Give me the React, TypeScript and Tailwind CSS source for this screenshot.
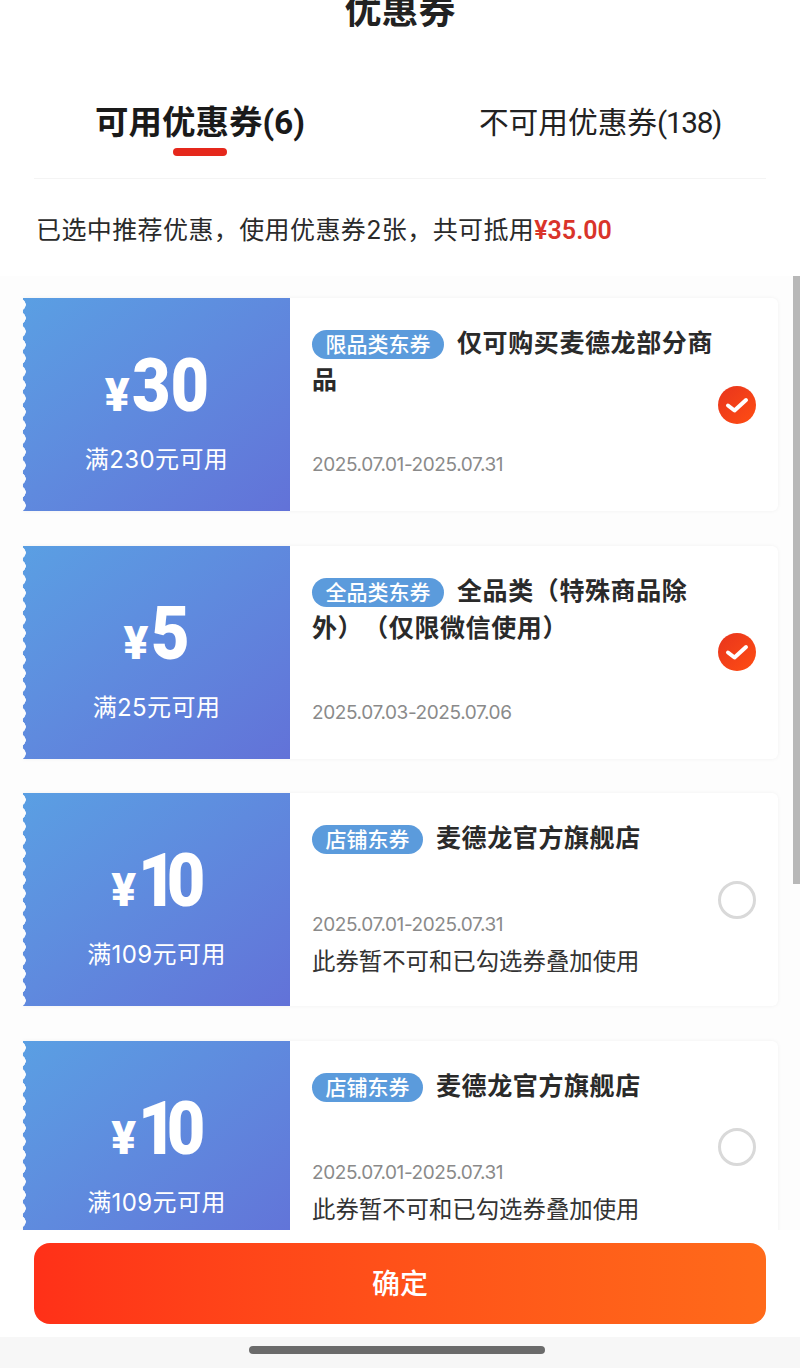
import React from 'react';

interface Coupon {
  amount: string;
  amountClass: string;
  condition: string;
  tag: string;
  title: string;
  date: string;
  note?: string;
  checked: boolean;
}

const coupons: Coupon[] = [
  { amount: '30', amountClass: 'mr-[-9px]', condition: '满230元可用', tag: '限品类东券', title: '仅可购买麦德龙部分商品', date: '2025.07.01-2025.07.31', checked: true },
  { amount: '5', amountClass: 'mr-[-4px]', condition: '满25元可用', tag: '全品类东券', title: '全品类（特殊商品除外）（仅限微信使用）', date: '2025.07.03-2025.07.06', checked: true },
  { amount: '10', amountClass: 'tracking-[-11px]', condition: '满109元可用', tag: '店铺东券', title: '麦德龙官方旗舰店', date: '2025.07.01-2025.07.31', note: '此券暂不可和已勾选券叠加使用', checked: false },
  { amount: '10', amountClass: 'tracking-[-11px]', condition: '满109元可用', tag: '店铺东券', title: '麦德龙官方旗舰店', date: '2025.07.01-2025.07.31', note: '此券暂不可和已勾选券叠加使用', checked: false },
];

function CheckMark({ checked }: { checked: boolean }) {
  if (!checked) {
    return <div className="h-[38px] w-[38px] shrink-0 rounded-full border-[3px] border-[#d9d9d9]"></div>;
  }
  return (
    <div className="flex h-[38px] w-[38px] shrink-0 items-center justify-center rounded-full bg-gradient-to-br from-[#e8341c] to-[#ff4d12]">
      <svg width="24" height="20" viewBox="0 0 24 20" fill="none">
        <path d="M3 10.5 L9.5 15.5 L21 5" stroke="white" strokeWidth="4" strokeLinecap="round" strokeLinejoin="round" />
      </svg>
    </div>
  );
}

function CouponCard({ coupon }: { coupon: Coupon }) {
  return (
    <div className="flex h-[213px] shrink-0 rounded-r-md bg-white shadow-[0_0_4px_rgba(0,0,0,0.05)]">
      {/* Ticket stub */}
      <div className="relative flex w-[267px] shrink-0 flex-col items-center bg-gradient-to-br from-[#5a9fe3] to-[#6272d8] pt-[51px] text-white">
        <div className="absolute bottom-0 left-[-3px] top-0 w-[8px] bg-[radial-gradient(circle_at_0_50%,#fdfdfd_5.5px,transparent_6px)] bg-[length:8px_13.4px]"></div>
        <div className="flex h-[75px] items-baseline font-['Roboto','Noto_Sans_CJK_SC',sans-serif] font-black leading-none">
          <span className="mr-[2px] text-[46px]">¥</span>
          <span className={`inline-block origin-left scale-x-[0.9] text-[74px] ${coupon.amountClass}`}>{coupon.amount}</span>
        </div>
        <div className="mt-[21px] text-[24px] leading-[30px] tracking-[0.4px]">{coupon.condition}</div>
      </div>

      {/* Details */}
      <div className="flex min-w-0 flex-1 items-center pl-[22px] pr-[22px]">
        <div className="flex h-full min-w-0 flex-1 flex-col justify-between pb-[30px] pt-[27px]">
          <div className="text-[25px] font-semibold leading-[37px] tracking-[0.6px] text-[#2a2a2a] [text-spacing-trim:space-all]">
            <span className="mr-[13px] inline-flex h-[29px] items-center rounded-full bg-[#5b9bdc] px-[13.5px] align-baseline text-[21px] font-medium tracking-normal text-white">
              {coupon.tag}
            </span>
            {coupon.title}
          </div>
          <div>
            <div className="text-[19px] leading-[32px] tracking-[-0.4px] text-[#8a8a8a]">{coupon.date}</div>
            {coupon.note && <div className="mb-[-2px] mt-[5px] text-[23.4px] leading-[32px] text-[#333333]">{coupon.note}</div>}
          </div>
        </div>
        <div className="ml-[4px]">
          <CheckMark checked={coupon.checked} />
        </div>
      </div>
    </div>
  );
}

export default function App() {
  return (
    <div className="relative flex h-[1368px] w-[800px] flex-col overflow-hidden bg-white font-['Inter','Noto_Sans_CJK_SC',sans-serif]">
      {/* Header */}
      <div className="h-[276px] shrink-0 bg-white">
        <div className="mt-[-14px] text-center text-[37px] font-bold leading-[50px] text-[#222222]">优惠券</div>

        <div className="mx-[34px] mt-[60px] h-[83px] border-b border-[#f4f4f4]">
          <div className="mx-[-34px] grid grid-cols-2 font-['Roboto','Noto_Sans_CJK_SC',sans-serif]">
            <div className="flex flex-col items-center">
              <div className="text-[33.5px] font-bold leading-[54px] text-[#1a1a1a]">可用优惠券(6)</div>
              <div className="mt-[-2px] h-[8px] w-[54px] rounded-full bg-[#e5281c]"></div>
            </div>
            <div className="text-center text-[29.7px] leading-[54px] text-[#222222]">
              不可用优惠券<span className="tracking-[-1.3px]">(138)</span>
            </div>
          </div>
        </div>

        <div className="mt-[31px] pl-[36px] text-[25px] leading-[40px] tracking-[0.4px] text-[#2a2a2a]">
          已选中推荐优惠，使用优惠券2张，共可抵用
          <span className="font-['Roboto','Noto_Sans_CJK_SC',sans-serif] font-semibold tracking-normal text-[#d9342a]">¥35.00</span>
        </div>
      </div>

      {/* Coupon list */}
      <div className="relative min-h-0 flex-1 overflow-hidden bg-[#fdfdfd]">
        <div className="flex flex-col gap-[34.5px] pl-[23px] pr-[22px] pt-[22px]">
          {coupons.map((coupon, i) => (
            <CouponCard key={i} coupon={coupon} />
          ))}
        </div>
        <div className="absolute right-0 top-0 h-[608px] w-[7px] bg-[#b8b8b8]"></div>
      </div>

      {/* Footer */}
      <div className="h-[107px] shrink-0 bg-white px-[34px] pt-[13px]">
        <button className="flex h-[81px] w-full items-center justify-center rounded-[16px] bg-gradient-to-r from-[#ff3018] to-[#ff6a1a] text-[28px] font-medium text-white">
          确定
        </button>
      </div>

      {/* Home indicator */}
      <div className="flex h-[31px] shrink-0 justify-center bg-[#f7f7f7] pr-[6px] pt-[9px]">
        <div className="h-[8px] w-[296px] rounded-full bg-[#6b6b6b]"></div>
      </div>
    </div>
  );
}
